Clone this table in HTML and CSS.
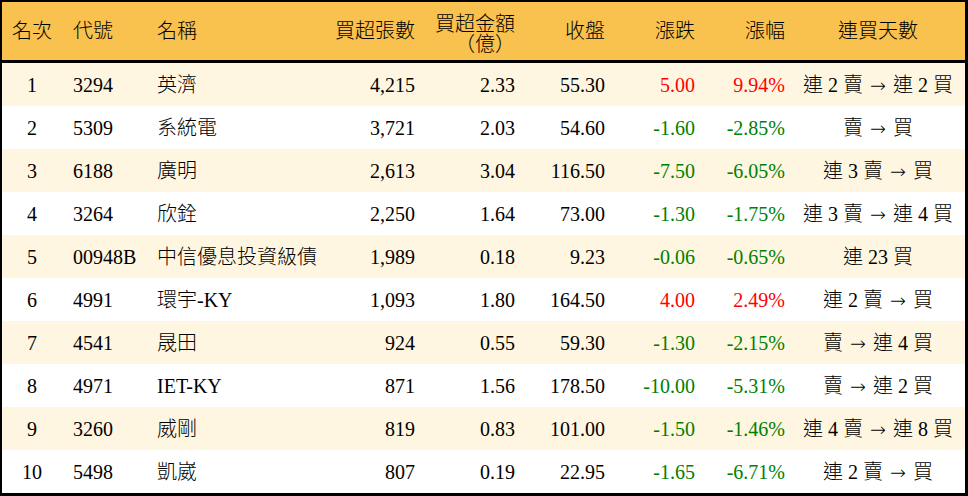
FILE: index.html
```html
<!DOCTYPE html>
<html lang="zh-Hant">
<head>
<meta charset="utf-8">
<title>買超排行</title>
<link rel="stylesheet" href="styles.css">
</head>
<body>
<div class="frame">
  <div class="row head">
    <div class="c center">名次</div>
    <div class="c left code">代號</div>
    <div class="c left name">名稱</div>
    <div class="c right">買超張數</div>
    <div class="c right two">買超金額<br>（億）</div>
    <div class="c right">收盤</div>
    <div class="c right">漲跌</div>
    <div class="c right">漲幅</div>
    <div class="c center days">連買天數</div>
  </div>
  <div class="row alt">
    <div class="c center">1</div><div class="c left code">3294</div><div class="c left name">英濟</div>
    <div class="c right">4,215</div><div class="c right">2.33</div><div class="c right">55.30</div>
    <div class="c right up">5.00</div><div class="c right up">9.94%</div><div class="c center days">連 2 賣 <span class="arr">→</span> 連 2 買</div>
  </div>
  <div class="row">
    <div class="c center">2</div><div class="c left code">5309</div><div class="c left name">系統電</div>
    <div class="c right">3,721</div><div class="c right">2.03</div><div class="c right">54.60</div>
    <div class="c right down">-1.60</div><div class="c right down">-2.85%</div><div class="c center days">賣 <span class="arr">→</span> 買</div>
  </div>
  <div class="row alt">
    <div class="c center">3</div><div class="c left code">6188</div><div class="c left name">廣明</div>
    <div class="c right">2,613</div><div class="c right">3.04</div><div class="c right">116.50</div>
    <div class="c right down">-7.50</div><div class="c right down">-6.05%</div><div class="c center days">連 3 賣 <span class="arr">→</span> 買</div>
  </div>
  <div class="row">
    <div class="c center">4</div><div class="c left code">3264</div><div class="c left name">欣銓</div>
    <div class="c right">2,250</div><div class="c right">1.64</div><div class="c right">73.00</div>
    <div class="c right down">-1.30</div><div class="c right down">-1.75%</div><div class="c center days">連 3 賣 <span class="arr">→</span> 連 4 買</div>
  </div>
  <div class="row alt">
    <div class="c center">5</div><div class="c left code">00948B</div><div class="c left name">中信優息投資級債</div>
    <div class="c right">1,989</div><div class="c right">0.18</div><div class="c right">9.23</div>
    <div class="c right down">-0.06</div><div class="c right down">-0.65%</div><div class="c center days">連 23 買</div>
  </div>
  <div class="row">
    <div class="c center">6</div><div class="c left code">4991</div><div class="c left name">環宇-KY</div>
    <div class="c right">1,093</div><div class="c right">1.80</div><div class="c right">164.50</div>
    <div class="c right up">4.00</div><div class="c right up">2.49%</div><div class="c center days">連 2 賣 <span class="arr">→</span> 買</div>
  </div>
  <div class="row alt">
    <div class="c center">7</div><div class="c left code">4541</div><div class="c left name">晟田</div>
    <div class="c right">924</div><div class="c right">0.55</div><div class="c right">59.30</div>
    <div class="c right down">-1.30</div><div class="c right down">-2.15%</div><div class="c center days">賣 <span class="arr">→</span> 連 4 買</div>
  </div>
  <div class="row">
    <div class="c center">8</div><div class="c left code">4971</div><div class="c left name">IET-KY</div>
    <div class="c right">871</div><div class="c right">1.56</div><div class="c right">178.50</div>
    <div class="c right down">-10.00</div><div class="c right down">-5.31%</div><div class="c center days">賣 <span class="arr">→</span> 連 2 買</div>
  </div>
  <div class="row alt">
    <div class="c center">9</div><div class="c left code">3260</div><div class="c left name">威剛</div>
    <div class="c right">819</div><div class="c right">0.83</div><div class="c right">101.00</div>
    <div class="c right down">-1.50</div><div class="c right down">-1.46%</div><div class="c center days">連 4 賣 <span class="arr">→</span> 連 8 買</div>
  </div>
  <div class="row">
    <div class="c center">10</div><div class="c left code">5498</div><div class="c left name">凱崴</div>
    <div class="c right">807</div><div class="c right">0.19</div><div class="c right">22.95</div>
    <div class="c right down">-1.65</div><div class="c right down">-6.71%</div><div class="c center days">連 2 賣 <span class="arr">→</span> 買</div>
  </div>
</div>
</body>
</html>
```

FILE: styles.css
```css
html, body {
  margin: 0;
  padding: 0;
  background: #ffffff;
}
.frame {
  width: 968px;
  height: 496px;
  box-sizing: border-box;
  border-style: solid;
  border-color: #000;
  border-width: 2px 3px 3px 2px;
  font-family: "Liberation Serif", "Noto Sans CJK TC", serif;
  font-size: 20px;
  font-weight: 300;
  color: #000;
  overflow: hidden;
}
.row {
  display: grid;
  grid-template-columns: 60px 85px 178px 100px 100px 90px 90px 90px 170px;
  height: 43px;
  align-items: center;
  background: #ffffff;
}
.row.alt {
  background: #fff6e2;
}
.row.head {
  height: 58px;
  background: #f9c14e;
  border-bottom: 3px solid #000;
}
.c {
  white-space: nowrap;
  line-height: 22px;
}
.center { text-align: center; }
.left { text-align: left; }
.right { text-align: right; padding-right: 10px; }
.code { padding-left: 11px; }
.name { padding-left: 10px; }
.days { padding-right: 4px; }
.two {
  line-height: 20px;
  padding-top: 6px;
}
.arr {
  font-family: "DejaVu Sans", sans-serif;
  font-size: 19px;
  margin: 0 2px;
}
.up { color: #ff0000; }
.down { color: #008000; }
```
